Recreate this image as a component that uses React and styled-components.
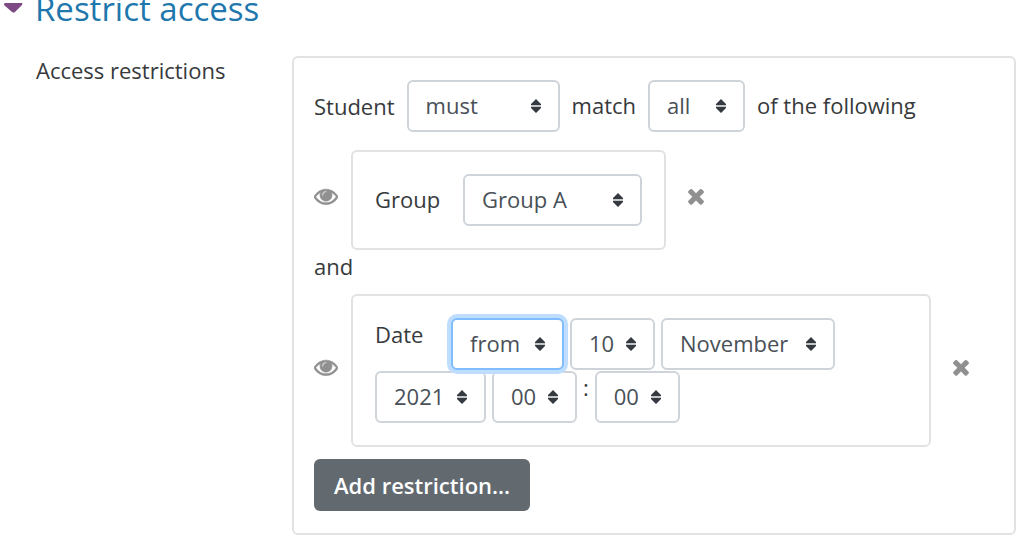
import React from "react";
import styled, { createGlobalStyle, css } from "styled-components";

const GlobalStyle = createGlobalStyle`
  *, *::before, *::after { box-sizing: border-box; }
  body {
    margin: 0;
    background: #fff;
    color: #373a3c;
    font-family: "Open Sans", "Noto Sans", sans-serif;
    font-size: 22px;
    line-height: 32px;
  }
`;

const Section = styled.section`
  padding: 0 8px 6px 4px;
`;

const SectionTitle = styled.h2`
  margin: 0 0 38px;
  font-size: 33px;
  font-weight: 400;
  line-height: 18px;
`;

const TitleLink = styled.a`
  display: flex;
  gap: 12px;
  color: #1f78ad;
  text-decoration: none;
`;

const Caret = styled.svg`
  flex: none;
  width: 19px;
  height: 10px;
  margin-top: 3px;
  fill: #7d4a83;
`;

const FieldRow = styled.div`
  display: grid;
  grid-template-columns: 256px minmax(0, 1fr);
  padding-left: 32px;
`;

const FieldLabel = styled.div`
  line-height: 28px;
`;

const Panel = styled.div`
  padding: 22px 20px;
  border: 2px solid #e2e2e2;
  border-radius: 6px;
`;

const MatchRow = styled.div`
  display: flex;
  align-items: center;
  gap: 12px;
  margin-bottom: 18px;
`;

const selectArrow =
  "data:image/svg+xml,%3Csvg xmlns='http://www.w3.org/2000/svg' viewBox='0 0 10 14'%3E%3Cpath fill='%23c4c6c8' d='M0 5h10v4H0z'/%3E%3Cpath fill='%23343a40' d='M5 0L0 5v1h10V5zM5 14L0 9V8h10v1z'/%3E%3C/svg%3E";

const Select = styled.select`
  appearance: none;
  flex: none;
  width: ${(p) => p.$width}px;
  height: 52px;
  padding: 0 0 2px 17px;
  border: 2px solid #ced4da;
  border-radius: 6px;
  background: #fff url("${selectArrow}") no-repeat right 17px center / 10px 14px;
  color: #495057;
  font: inherit;
  outline: none;
  ${(p) =>
    p.$active &&
    css`
      position: relative;
      border-color: #80bdff;
      box-shadow: 0 0 0 4px #bfdeff;
    `}
`;

const Condition = styled.div`
  display: flex;
  align-items: center;
`;

const IconButton = styled.button`
  display: flex;
  flex: none;
  justify-content: ${(p) => (p.$end ? "center" : "flex-start")};
  width: ${(p) => (p.$end ? 63 : 37)}px;
  padding: 0 ${(p) => (p.$end ? 4 : 0)}px 8px 0;
  border: 0;
  background: none;
  color: #909090;
  cursor: pointer;
`;

const Glyph = styled.svg`
  width: 24px;
  height: 24px;
  fill: currentColor;
`;

const ConditionBox = styled.div`
  display: flex;
  flex-wrap: wrap;
  align-items: ${(p) => (p.$top ? "flex-start" : "center")};
  gap: 1px 6px;
  min-width: 0;
  padding: 22px;
  border: 2px solid #e2e2e2;
  border-radius: 6px;
`;

const InlineLabel = styled.label`
  padding-bottom: 2px;
`;

const ConditionLabel = styled(InlineLabel)`
  min-width: 70px;
  margin-right: ${(p) => (p.$wide ? 0 : 12)}px;
`;

const Joiner = styled.div`
  margin-bottom: 12px;
`;

const AddButton = styled.button`
  display: block;
  height: 52px;
  margin-top: 12px;
  padding: 0 20px;
  border: 0;
  border-radius: 6px;
  background: #626a70;
  color: #fff;
  font: inherit;
  font-weight: 600;
  cursor: pointer;
`;

const EyeToggle = () => (
  <IconButton type="button" aria-label="Toggle visibility">
    <Glyph viewBox="0 0 1792 1792" stroke="currentColor" strokeWidth="50" aria-hidden="true">
      <path d="M1664 960q-152-236-381-353 61 104 61 225 0 185-131.5 316.5t-316.5 131.5-316.5-131.5-131.5-316.5q0-121 61-225-229 117-381 353 133 205 333.5 326.5t434.5 121.5 434.5-121.5 333.5-326.5zm-720-384q0-20-14-34t-34-14q-125 0-214.5 89.5t-89.5 214.5q0 20 14 34t34 14 34-14 14-34q0-86 61-147t147-61q20 0 34-14t14-34zm848 384q0 34-20 69-140 230-376.5 368.5t-499.5 138.5-499.5-139-376.5-368q-20-35-20-69t20-69q140-229 376.5-368t499.5-139 499.5 139 376.5 368q20 35 20 69z" />
    </Glyph>
  </IconButton>
);

const RemoveCondition = () => (
  <IconButton type="button" aria-label="Remove" $end>
    <Glyph viewBox="0 0 1792 1792" aria-hidden="true">
      <path d="M1490 1322q0 40-28 68l-136 136q-28 28-68 28t-68-28l-294-294-294 294q-28 28-68 28t-68-28l-136-136q-28-28-28-68t28-68l294-294-294-294q-28-28-28-68t28-68l136-136q28-28 68-28t68 28l294 294 294-294q28-28 68-28t68 28l136 136q28 28 28 68t-28 68l-294 294 294 294q28 28 28 68z" />
    </Glyph>
  </IconButton>
);

const Choice = ({ value, ...rest }) => (
  <Select defaultValue={value} {...rest}>
    <option value={value}>{value}</option>
  </Select>
);

export default function App() {
  return (
    <>
      <GlobalStyle />
      <Section>
        <SectionTitle>
          <TitleLink href="#restrict-access">
            <Caret viewBox="0 0 19 10" aria-hidden="true">
              <path d="M1 0h17q1 0 0 2l-7 7q-1 1-3 0L0 2q0-2 1-2z" />
            </Caret>
            Restrict access
          </TitleLink>
        </SectionTitle>
        <FieldRow id="restrict-access">
          <FieldLabel id="restrictions-label">Access restrictions</FieldLabel>
          <Panel role="group" aria-labelledby="restrictions-label">
            <MatchRow>
              <label htmlFor="must">Student</label>
              <Choice id="must" value="must" $width={153} />
              <InlineLabel htmlFor="all">match</InlineLabel>
              <Choice id="all" value="all" $width={97} />
              <InlineLabel htmlFor="all">of the following</InlineLabel>
            </MatchRow>
            <Condition>
              <EyeToggle />
              <ConditionBox>
                <ConditionLabel htmlFor="group">Group</ConditionLabel>
                <Choice id="group" value="Group A" $width={179} />
              </ConditionBox>
              <RemoveCondition />
            </Condition>
            <Joiner>and</Joiner>
            <Condition>
              <EyeToggle />
              <ConditionBox $top>
                <ConditionLabel htmlFor="direction" $wide>Date</ConditionLabel>
                <Choice id="direction" value="from" $width={113} $active />
                <Choice aria-label="Day" value="10" $width={85} />
                <Choice aria-label="Month" value="November" $width={174} />
                <Choice aria-label="Year" value="2021" $width={111} />
                <Choice aria-label="Hour" value="00" $width={85} />
                <span>:</span>
                <Choice aria-label="Minute" value="00" $width={85} />
              </ConditionBox>
              <RemoveCondition />
            </Condition>
            <AddButton type="button">Add restriction...</AddButton>
          </Panel>
        </FieldRow>
      </Section>
    </>
  );
}
